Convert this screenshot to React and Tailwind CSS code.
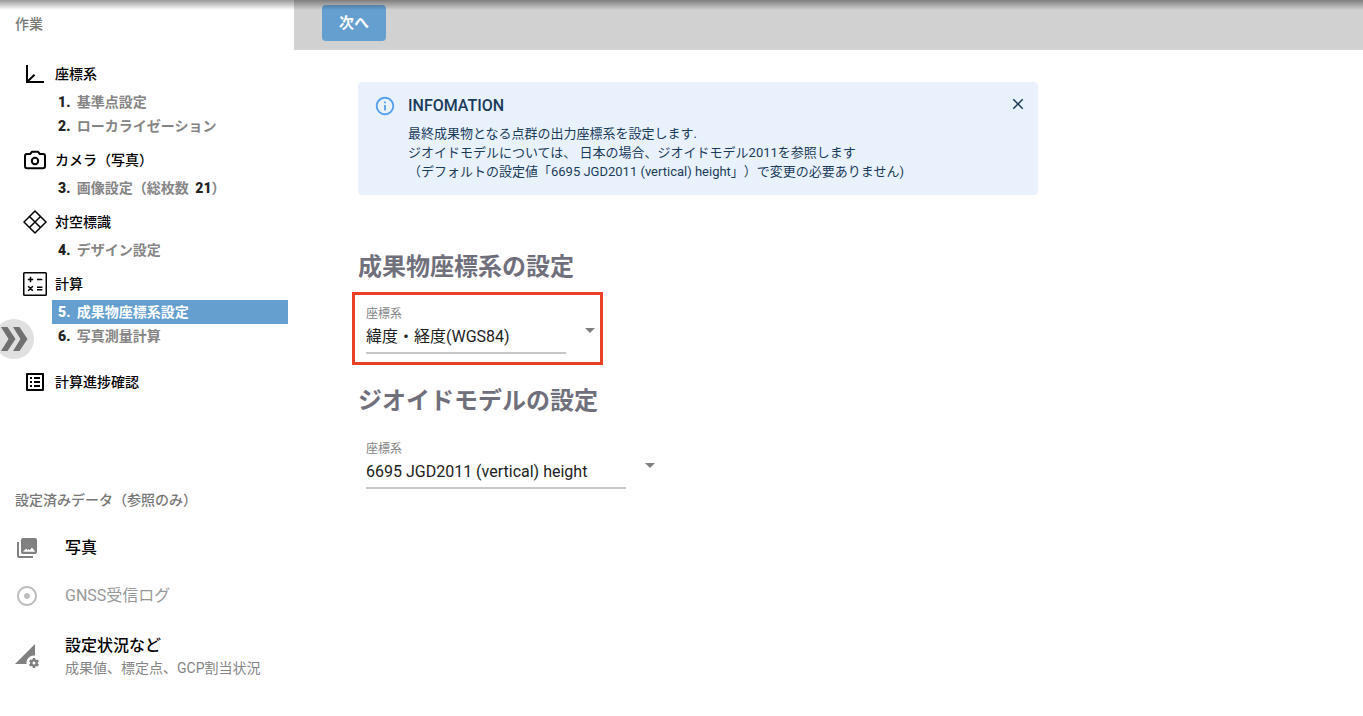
import { MdAdjust, MdArrowDropDown, MdClose, MdInfoOutline, MdListAlt, MdPermDataSetting } from 'react-icons/md';

const AxisIcon = () => (
  <svg viewBox="0 0 24 24" className="size-6" fill="none" stroke="currentColor" strokeWidth="2">
    <path d="M4 3v17h17" />
    <path d="M4.5 19.5L11.5 12.8" />
  </svg>
);

const CameraIcon = () => (
  <svg viewBox="0 0 24 24" className="size-6" fill="none" stroke="currentColor" strokeWidth="2" strokeLinejoin="round">
    <path d="M4 6h3.2l1.9-2.3h5.8L16.8 6H20a2 2 0 0 1 2 2v10.2a2 2 0 0 1-2 2H4a2 2 0 0 1-2-2V8a2 2 0 0 1 2-2z" />
    <circle cx="12" cy="13" r="3.2" />
  </svg>
);

const MarkerIcon = () => (
  <svg viewBox="0 0 24 24" className="size-6" fill="none" stroke="currentColor" strokeWidth="1.5" strokeLinejoin="round">
    <path d="M12 1L23 12L12 23L1 12Z" />
    <path d="M6.5 6.5l11 11M17.5 6.5l-11 11" />
  </svg>
);

const CalcIcon = () => (
  <svg viewBox="0 0 24 24" className="size-6" fill="none" stroke="currentColor" strokeWidth="1.5">
    <rect x="0.75" y="0.75" width="22.5" height="22.5" rx="0.75" />
    <path d="M4.8 7.5h5.4M7.5 4.8v5.4M14 7.5h5.4M14 15.3h5.4M14 17.8h5.4M5.2 14.2l4.6 4.6M9.8 14.2l-4.6 4.6" />
  </svg>
);

const PhotosIcon = () => (
  <svg viewBox="0 0 24 24" className="size-6" fill="currentColor">
    <path
      fillRule="evenodd"
      d="M8 2h12a2 2 0 0 1 2 2v12a2 2 0 0 1-2 2H8a2 2 0 0 1-2-2V4a2 2 0 0 1 2-2zM8 15.8H20.2L17 11.4l-2.2 2.9-1.2-1.2-1 1.1-1.4-1.8z"
    />
    <path d="M2 6h2v14h14v2H4a2 2 0 0 1-2-2z" />
  </svg>
);

const groups = [
  {
    title: '座標系',
    icon: <AxisIcon />,
    items: [
      { no: 1, label: '基準点設定' },
      { no: 2, label: 'ローカライゼーション' },
    ],
  },
  {
    title: 'カメラ（写真）',
    icon: <CameraIcon />,
    items: [{ no: 3, label: '画像設定（総枚数 ', count: 21, tail: '）' }],
  },
  {
    title: '対空標識',
    icon: <MarkerIcon />,
    items: [{ no: 4, label: 'デザイン設定' }],
  },
  {
    title: '計算',
    icon: <CalcIcon />,
    items: [
      { no: 5, label: '成果物座標系設定', active: true },
      { no: 6, label: '写真測量計算' },
    ],
  },
];

const GroupTitle = ({ icon, children }) => (
  <div className="flex h-8 items-center gap-2 pl-[23px] text-sm font-medium text-black">
    {icon}
    {children}
  </div>
);

const StepLink = ({ item }) => (
  <a
    href="#"
    aria-current={item.active ? 'step' : undefined}
    className={`ml-[52px] mr-1.5 flex h-6 items-center whitespace-pre pl-1.5 text-sm font-bold ${
      item.active ? 'bg-[#659fd0] text-white' : 'text-[#858585]'
    }`}
  >
    <span className={`mr-[3px] font-black ${item.active ? '' : 'text-[#222]'}`}>{item.no}. </span>
    {item.label}
    {item.count && <span className="ml-[3px] font-black text-[#222]">{item.count}</span>}
    {item.tail}
  </a>
);

const Sidebar = () => (
  <aside className="relative w-[294px] shrink-0">
    <h2 className="flex h-12 items-center pl-[15px] text-sm font-medium text-[#777]">作業</h2>
    <nav className="flex flex-col gap-1.5 pt-2.5">
      {groups.map((group) => (
        <div key={group.title}>
          <GroupTitle icon={group.icon}>{group.title}</GroupTitle>
          {group.items.map((item) => (
            <StepLink key={item.no} item={item} />
          ))}
        </div>
      ))}
    </nav>
    <div className="pt-[18px]">
      <GroupTitle icon={<MdListAlt className="size-6" />}>計算進捗確認</GroupTitle>
    </div>

    <h2 className="mt-[78px] flex h-12 items-center pl-[15px] text-sm font-medium text-[#777]">
      設定済みデータ（参照のみ）
    </h2>
    <ul className="text-base leading-6">
      <li className="flex h-12 items-center pl-[15px] font-medium text-black">
        <span className="mr-[26px] text-[#808080]">
          <PhotosIcon />
        </span>
        写真
      </li>
      <li className="flex h-12 items-center pl-[15px] text-[#999]">
        <MdAdjust className="mr-[26px] size-6 text-[#bdbdbd]" />
        GNSS受信ログ
      </li>
      <li className="flex items-center pt-3.5 pl-[15px] font-medium text-black">
        <MdPermDataSetting className="mr-[26px] size-6 text-[#808080]" />
        <div>
          設定状況など
          <p className="text-sm leading-5 font-normal text-[#858585]">成果値、標定点、GCP割当状況</p>
        </div>
      </li>
    </ul>

    <button
      aria-label="メニューを開く"
      className="absolute top-[319px] -left-1.5 flex size-10 items-center justify-center rounded-full bg-[#e0e0e0] text-[#707070]"
    >
      <svg viewBox="0 0 28 24" className="h-6 w-7" fill="currentColor">
        <path d="M1 0h6.5l8 12-8 12H1l7.5-12zM13 0h6.5l8 12-8 12H13l7.5-12z" />
      </svg>
    </button>
  </aside>
);

const InfoAlert = () => (
  <section className="flex max-w-[680px] rounded bg-[#e9f2fc] pt-3 pr-2 pb-3.5 pl-4 text-[#1b3b5c]">
    <MdInfoOutline className="mt-px mr-3 size-[22px] shrink-0 text-[#559ef0]" />
    <div className="grow">
      <h2 className="mb-1.5 text-base leading-6 font-medium">INFOMATION</h2>
      <p className="text-[13px] leading-[19px] [text-spacing-trim:space-all]">
        最終成果物となる点群の出力座標系を設定します.
        <br />
        ジオイドモデルについては、 日本の場合、ジオイドモデル2011を参照します
        <br />
        （デフォルトの設定値「6695 JGD2011 (vertical) height」）で変更の必要ありません)
      </p>
    </div>
    <button aria-label="閉じる" className="flex h-5 w-6 items-center justify-center self-start">
      <MdClose className="size-[18px]" />
    </button>
  </section>
);

const SelectField = ({ id, value, width }) => (
  <div>
    <label htmlFor={id} className="block text-xs leading-4 text-[#858585]">
      座標系
    </label>
    <div className="flex">
      <select
        id={id}
        defaultValue={value}
        className={`h-8 shrink-0 appearance-none border-b-2 border-[#c8c8c8] bg-transparent text-base text-[#212121] ${width}`}
      >
        <option>{value}</option>
      </select>
      <MdArrowDropDown className="ml-3 -mt-1 size-6 shrink-0 text-[#808080]" />
    </div>
  </div>
);

const App = () => (
  <div className="relative flex min-h-screen bg-white font-[Roboto,'Noto_Sans_CJK_JP',sans-serif]">
    <Sidebar />
    <div className="min-w-0 grow">
      <header className="flex h-[50px] bg-[#d1d1d1] pt-[5px] pl-7">
        <button className="h-9 rounded bg-[#659fd0] px-[17px] text-[15px] font-bold text-white">次へ</button>
      </header>
      <main className="px-16 pt-8">
        <InfoAlert />
        <h1 className="mt-14 text-2xl leading-8 font-bold text-[#70707c]">成果物座標系の設定</h1>
        <div className="mt-[9px] -ml-1.5 w-[251px] border-3 border-[#ea4025] pt-[11px] pl-[11px] pb-2">
          <SelectField id="output-crs" value="緯度・経度(WGS84)" width="w-[200px]" />
        </div>
        <h1 className="mt-5 text-2xl leading-8 font-bold text-[#70707c]">ジオイドモデルの設定</h1>
        <div className="mt-6 pl-2">
          <SelectField id="geoid-model" value="6695 JGD2011 (vertical) height" width="w-[260px]" />
        </div>
      </main>
    </div>
    <div className="pointer-events-none absolute inset-x-0 top-0 h-2.5 bg-linear-to-b from-black/40 to-transparent" />
  </div>
);

export default App;
